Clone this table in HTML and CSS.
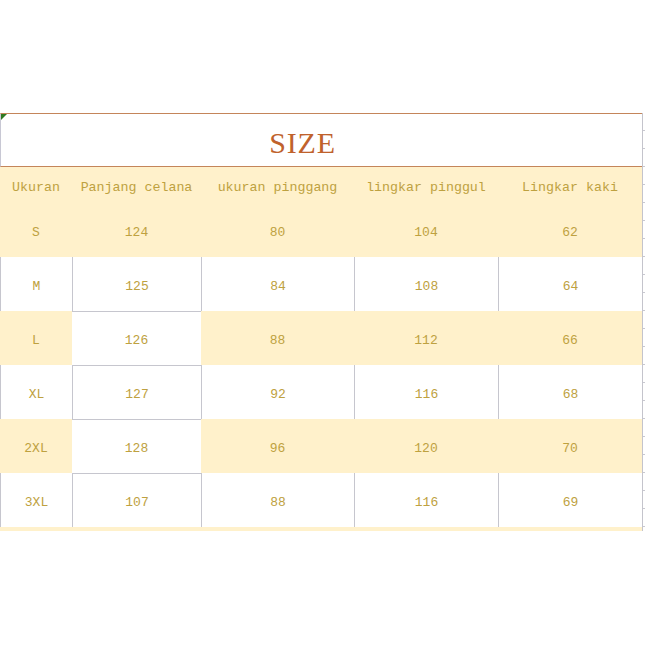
FILE: index.html
```html
<!DOCTYPE html>
<html>
<head>
<meta charset="utf-8">
<link rel="stylesheet" href="styles.css">
</head>
<body>
<div class="page">
  <div class="sheet">
    <div class="title"><span class="flag"></span><span class="title-text">SIZE</span></div>
    <div class="grid">
      <div class="c hd">Ukuran</div>
      <div class="c hd">Panjang celana</div>
      <div class="c hd">ukuran pinggang</div>
      <div class="c hd">lingkar pinggul</div>
      <div class="c hd">Lingkar kaki</div>

      <div class="c">S</div>
      <div class="c">124</div>
      <div class="c">80</div>
      <div class="c">104</div>
      <div class="c">62</div>

      <div class="c w bl">M</div>
      <div class="c w bl">125</div>
      <div class="c w bl">84</div>
      <div class="c w bl">108</div>
      <div class="c w bl">64</div>

      <div class="c">L</div>
      <div class="c w bt">126</div>
      <div class="c">88</div>
      <div class="c">112</div>
      <div class="c">66</div>

      <div class="c w bl">XL</div>
      <div class="c w bl bt">127</div>
      <div class="c w bl">92</div>
      <div class="c w bl">116</div>
      <div class="c w bl">68</div>

      <div class="c">2XL</div>
      <div class="c w bt">128</div>
      <div class="c">96</div>
      <div class="c">120</div>
      <div class="c">70</div>

      <div class="c w bl">3XL</div>
      <div class="c w bl bt">107</div>
      <div class="c w bl">88</div>
      <div class="c w bl">116</div>
      <div class="c w bl">69</div>
    </div>
    <div class="strip"></div>
  </div>
  <div class="gutter"></div>
</div>
</body>
</html>
```

FILE: styles.css
```css
html, body {
  margin: 0;
  padding: 0;
  background: #ffffff;
}

.page {
  display: flex;
  margin-top: 113px;
  width: 645px;
}

.sheet {
  width: 642px;
  border-right: 1px solid #c4c4cc;
}

.title {
  position: relative;
  height: 52px;
  border-top: 1px solid #c4855a;
  border-bottom: 1px solid #c4855a;
  border-left: 1px solid #c8c8d4;
  display: flex;
  align-items: center;
  justify-content: center;
  padding-right: 38px;
  box-sizing: content-box;
}

.flag {
  position: absolute;
  left: 0;
  top: 0;
  width: 0;
  height: 0;
  border-top: 6px solid #2f7a23;
  border-right: 6px solid transparent;
}

.title-text {
  font-family: "Liberation Serif", serif;
  font-size: 30px;
  color: #c0622c;
  letter-spacing: 0.8px;
  padding-top: 5px;
}

.grid {
  display: grid;
  grid-template-columns: 72px 129px 153px 144px 144px;
  grid-template-rows: 37px 53px repeat(5, 54px);
}

.c {
  background: #fff1cb;
  box-sizing: border-box;
  display: flex;
  align-items: center;
  justify-content: center;
  font-family: "Liberation Mono", monospace;
  font-size: 13px;
  color: #bea140;
  padding-top: 4px;
}

.hd {
  font-size: 13.3px;
  padding-top: 3px;
}

.w {
  background: #ffffff;
}

.bl {
  border-left: 1px solid #c6c6ce;
}

.bt {
  border-top: 1px solid #c6c6ce;
}

.strip {
  height: 4px;
  background: #fff1cb;
}

.gutter {
  width: 2px;
  height: 418px;
  background: repeating-linear-gradient(to bottom, transparent 0, transparent 17px, #c8c8d0 17px, #c8c8d0 18px);
}
```
